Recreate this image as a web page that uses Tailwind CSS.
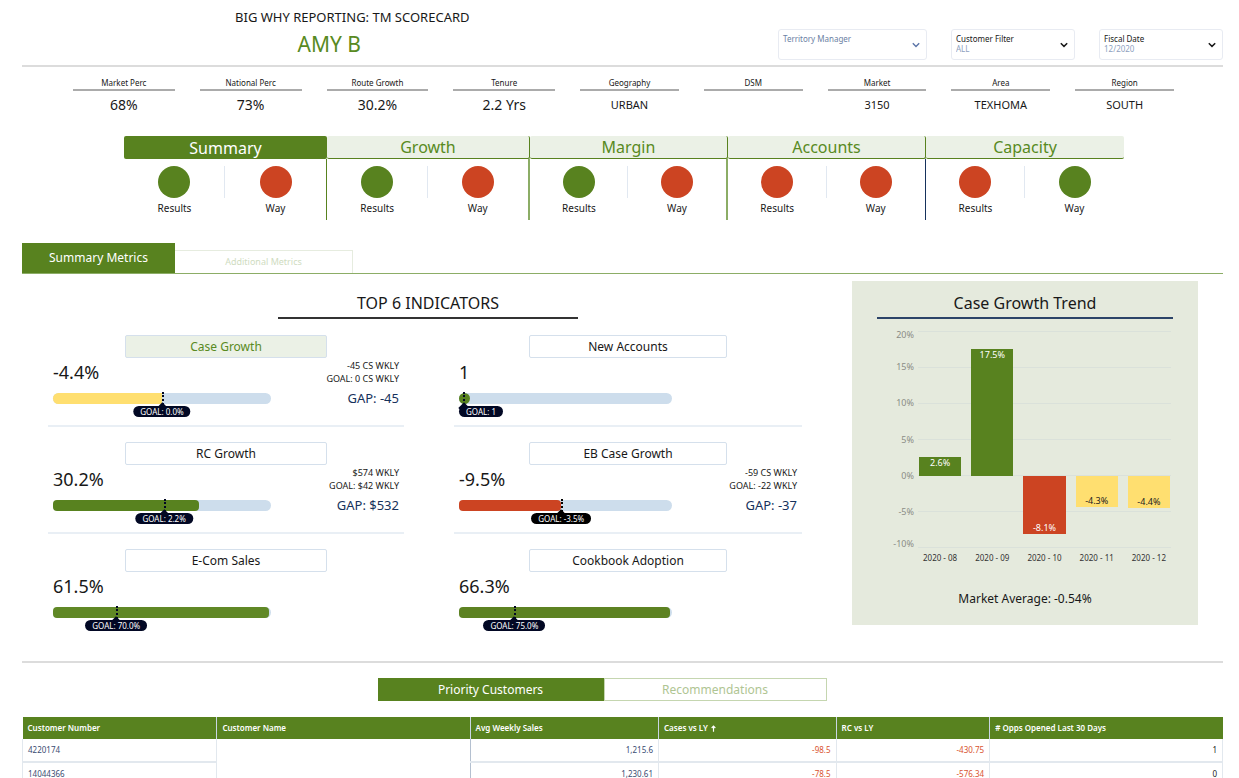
<!DOCTYPE html>
<html lang="en">
<head>
    <meta charset="UTF-8">
    <meta name="viewport" content="width=device-width, initial-scale=1.0">
    <title>TM Scorecard</title>
    <script src="https://cdn.jsdelivr.net/npm/@tailwindcss/browser@4"></script>
</head>
<body class="bg-white text-[#181818] font-['Noto_Sans',sans-serif] pl-[22px] pr-4">

    <!--Header and filters-->
    <header class="flex justify-between h-[67px] border-b-2 border-[#dcdcdc]">
        <div class="w-[55%] pt-[7px]">
            <h1 class="text-[13px] leading-5 text-center">BIG WHY REPORTING: TM SCORECARD</h1>
            <p class="text-[21px] leading-[34px] text-center text-[#588a22] pr-[46px]">AMY B</p>
        </div>
        <form class="flex gap-6 pt-[29px]">
            <div class="relative w-[149px] h-[31px] border border-[#e8ebf2] rounded-[3px] pl-1 pt-1">
                <label for="manager" class="block text-[8px] leading-[10px] text-[#6b7fa3]">Territory Manager</label>
                <select id="manager" class="absolute inset-0 w-full pl-1 pt-2 appearance-none text-[8px] text-[#8e9fc0]">
                    <option></option>
                </select>
                <svg class="absolute right-[6px] top-[11px] w-2 h-2 text-[#5b74a8]" viewBox="0 0 8 8" fill="none" stroke="currentColor" stroke-width="1.4"><path d="M0.8 2.2 4 5.4 7.2 2.2"/></svg>
            </div>
            <div class="relative w-[124px] h-[31px] border border-[#e8ebf2] rounded-[3px] pl-1 pt-1">
                <label for="customer" class="block text-[8px] leading-[10px]">Customer Filter</label>
                <select id="customer" class="absolute inset-0 w-full pl-1 pt-2 appearance-none text-[8px] text-[#8e9fc0]">
                    <option>ALL</option>
                </select>
                <svg class="absolute right-[6px] top-[11px] w-2 h-2" viewBox="0 0 8 8" fill="none" stroke="currentColor" stroke-width="1.5"><path d="M0.8 2.2 4 5.4 7.2 2.2"/></svg>
            </div>
            <div class="relative w-[124px] h-[31px] border border-[#e8ebf2] rounded-[3px] pl-1 pt-1">
                <label for="fiscal" class="block text-[8px] leading-[10px]">Fiscal Date</label>
                <select id="fiscal" class="absolute inset-0 w-full pl-1 pt-2 appearance-none text-[8px] text-[#8e9fc0]">
                    <option>12/2020</option>
                </select>
                <svg class="absolute right-[6px] top-[11px] w-2 h-2" viewBox="0 0 8 8" fill="none" stroke="currentColor" stroke-width="1.5"><path d="M0.8 2.2 4 5.4 7.2 2.2"/></svg>
            </div>
        </form>
    </header>

    <!--Profile facts-->
    <dl class="grid grid-cols-[102fr_102fr_102fr_102fr_99fr_99fr_99fr_99fr_99fr] gap-x-[25px] pl-[51px] pr-[49px] pt-[9px] h-[69px] text-center">
        <div>
            <dt class="text-[8px] leading-[13px] border-b-2 border-[#ababab]">Market Perc</dt>
            <dd class="text-[14px] leading-7">68%</dd>
        </div>
        <div>
            <dt class="text-[8px] leading-[13px] border-b-2 border-[#ababab]">National Perc</dt>
            <dd class="text-[14px] leading-7">73%</dd>
        </div>
        <div>
            <dt class="text-[8px] leading-[13px] border-b-2 border-[#ababab]">Route Growth</dt>
            <dd class="text-[14px] leading-7">30.2%</dd>
        </div>
        <div>
            <dt class="text-[8px] leading-[13px] border-b-2 border-[#ababab]">Tenure</dt>
            <dd class="text-[14px] leading-7">2.2 Yrs</dd>
        </div>
        <div>
            <dt class="text-[8px] leading-[13px] border-b-2 border-[#ababab]">Geography</dt>
            <dd class="text-[11px] leading-7">URBAN</dd>
        </div>
        <div>
            <dt class="text-[8px] leading-[13px] border-b-2 border-[#ababab]">DSM</dt>
            <dd class="text-[11px] leading-7"></dd>
        </div>
        <div>
            <dt class="text-[8px] leading-[13px] border-b-2 border-[#ababab]">Market</dt>
            <dd class="text-[11px] leading-7">3150</dd>
        </div>
        <div>
            <dt class="text-[8px] leading-[13px] border-b-2 border-[#ababab]">Area</dt>
            <dd class="text-[11px] leading-7">TEXHOMA</dd>
        </div>
        <div>
            <dt class="text-[8px] leading-[13px] border-b-2 border-[#ababab]">Region</dt>
            <dd class="text-[11px] leading-7">SOUTH</dd>
        </div>
    </dl>

    <!--Score categories-->
    <section class="grid grid-cols-[203fr_203fr_198fr_198fr_198fr] pl-[102px] pr-[99px] text-center">
        <div>
            <button class="block w-full h-[23px] rounded-[2px] bg-[#58821f] text-white text-[16px] leading-[22px]">Summary</button>
            <div class="grid grid-cols-2 h-[61px] pt-[7px] border-r border-[#58821f] text-[10px] leading-4">
                <div><div class="border-r border-[#e1e8f1]"><div class="mx-auto w-8 h-8 rounded-full bg-[#58821f]"></div></div><p class="pt-[2px]">Results</p></div>
                <div><div class="mx-auto w-8 h-8 rounded-full bg-[#cc4422]"></div><p class="pt-[2px]">Way</p></div>
            </div>
        </div>
        <div>
            <button class="block w-full h-[23px] rounded-[2px] bg-[#ebf1e6] border-r border-b border-[#58821f] text-[#588a22] text-[16px] leading-[22px]">Growth</button>
            <div class="grid grid-cols-2 h-[61px] pt-[7px] border-r-2 border-[#8cad66] text-[10px] leading-4">
                <div><div class="border-r border-[#e1e8f1]"><div class="mx-auto w-8 h-8 rounded-full bg-[#58821f]"></div></div><p class="pt-[2px]">Results</p></div>
                <div><div class="mx-auto w-8 h-8 rounded-full bg-[#cc4422]"></div><p class="pt-[2px]">Way</p></div>
            </div>
        </div>
        <div>
            <button class="block w-full h-[23px] rounded-[2px] bg-[#ebf1e6] border-r border-b border-[#58821f] text-[#588a22] text-[16px] leading-[22px]">Margin</button>
            <div class="grid grid-cols-2 h-[61px] pt-[7px] border-r-2 border-[#8cad66] text-[10px] leading-4">
                <div><div class="border-r border-[#e1e8f1]"><div class="mx-auto w-8 h-8 rounded-full bg-[#58821f]"></div></div><p class="pt-[2px]">Results</p></div>
                <div><div class="mx-auto w-8 h-8 rounded-full bg-[#cc4422]"></div><p class="pt-[2px]">Way</p></div>
            </div>
        </div>
        <div>
            <button class="block w-full h-[23px] rounded-[2px] bg-[#ebf1e6] border-r border-b border-[#58821f] text-[#588a22] text-[16px] leading-[22px]">Accounts</button>
            <div class="grid grid-cols-2 h-[61px] pt-[7px] border-r border-[#16325c] text-[10px] leading-4">
                <div><div class="border-r border-[#e1e8f1]"><div class="mx-auto w-8 h-8 rounded-full bg-[#cc4422]"></div></div><p class="pt-[2px]">Results</p></div>
                <div><div class="mx-auto w-8 h-8 rounded-full bg-[#cc4422]"></div><p class="pt-[2px]">Way</p></div>
            </div>
        </div>
        <div>
            <button class="block w-full h-[23px] rounded-[2px] bg-[#ebf1e6] border-b border-[#58821f] text-[#588a22] text-[16px] leading-[22px]">Capacity</button>
            <div class="grid grid-cols-2 h-[61px] pt-[7px] text-[10px] leading-4">
                <div><div class="border-r border-[#e1e8f1]"><div class="mx-auto w-8 h-8 rounded-full bg-[#cc4422]"></div></div><p class="pt-[2px]">Results</p></div>
                <div><div class="mx-auto w-8 h-8 rounded-full bg-[#58821f]"></div><p class="pt-[2px]">Way</p></div>
            </div>
        </div>
    </section>

    <!--Metric tabs-->
    <nav class="flex items-end mt-[23px] border-b border-[#8cad66]">
        <button class="w-[153px] h-[30px] bg-[#58821f] text-white text-[12px]">Summary Metrics</button>
        <button class="w-[178px] h-[23px] border-t border-r border-[#e6ecdf] text-[#cfdcbf] text-[9px]">Additional Metrics</button>
    </nav>

    <main class="grid grid-cols-[356fr_348fr_346fr] gap-x-[50px] pl-[26px] pr-[25px] pt-[7px]">
        <!--Indicators-->
        <div class="col-span-2">
            <div class="h-[38px] pl-[6px]">
                <h2 class="w-[40%] mx-auto h-[38px] border-b-2 border-[#333333] text-center text-[16px] leading-[44px]">TOP 6 INDICATORS</h2>
            </div>
            <div class="grid grid-cols-[356fr_348fr] gap-x-[50px] pt-4">

                <article class="h-[92px] mb-[15px] border-b-2 border-[#e9eff5]">
                    <button class="block mx-auto w-[57%] h-[23px] border border-[#d5e0ec] rounded-[2px] bg-[#ebf1e6] text-[#588a22] text-[12px] leading-5">Case Growth</button>
                    <div class="flex justify-between px-[5px]">
                        <div class="w-[63%]">
                            <p class="text-[18px] leading-[28px]">-4.4%</p>
                            <div class="relative h-[11px] mt-[7px] rounded-full bg-[#cdddec]">
                                <div class="h-full rounded-l-full bg-[#ffdf70]" style="width: 50%"></div>
                                <div class="absolute -top-px -bottom-px border-l-2 border-dotted border-[#020824]" style="left: 50%"></div>
                                <div class="absolute top-[11px] -translate-x-1/2" style="left: 50%">
                                    <div class="mx-auto w-2 h-2 -mb-[6px] rotate-45 bg-[#020824]"></div>
                                    <p class="relative px-[7px] rounded-full bg-[#020824] text-white text-[8px] leading-[11px] whitespace-nowrap">GOAL: 0.0%</p>
                                </div>
                            </div>
                        </div>
                        <div class="pt-px text-right text-[9px] leading-[13px]">
                            <p>-45 CS WKLY</p>
                            <p>GOAL: 0 CS WKLY</p>
                            <p class="text-[13px] leading-[26px] text-[#16325c]">GAP: -45</p>
                        </div>
                    </div>
                </article>

                <article class="h-[92px] mb-[15px] border-b-2 border-[#e9eff5]">
                    <button class="block mx-auto w-[57%] h-[23px] border border-[#d5e0ec] rounded-[2px] text-[12px] leading-5">New Accounts</button>
                    <div class="flex justify-between px-[5px]">
                        <div class="w-[63%]">
                            <p class="text-[18px] leading-[28px]">1</p>
                            <div class="relative h-[11px] mt-[7px] rounded-full bg-[#cdddec]">
                                <div class="h-full rounded-full bg-[#58821f]" style="width: 5%"></div>
                                <div class="absolute -top-px -bottom-px border-l-2 border-dotted border-[#020824]" style="left: 2%"></div>
                                <div class="absolute top-[11px] left-0">
                                    <div class="ml-px w-2 h-2 -mb-[6px] rotate-45 bg-[#020824]"></div>
                                    <p class="relative px-[7px] rounded-full bg-[#020824] text-white text-[8px] leading-[11px] whitespace-nowrap">GOAL: 1</p>
                                </div>
                            </div>
                        </div>
                    </div>
                </article>

                <article class="h-[92px] mb-[15px] border-b-2 border-[#e9eff5]">
                    <button class="block mx-auto w-[57%] h-[23px] border border-[#d5e0ec] rounded-[2px] text-[12px] leading-5">RC Growth</button>
                    <div class="flex justify-between px-[5px]">
                        <div class="w-[63%]">
                            <p class="text-[18px] leading-[28px]">30.2%</p>
                            <div class="relative h-[11px] mt-[7px] rounded-full bg-[#cdddec]">
                                <div class="h-full rounded-[4px] bg-[#58821f]" style="width: 67%"></div>
                                <div class="absolute -top-px -bottom-px border-l-2 border-dotted border-[#020824]" style="left: 51%"></div>
                                <div class="absolute top-[11px] -translate-x-1/2" style="left: 51%">
                                    <div class="mx-auto w-2 h-2 -mb-[6px] rotate-45 bg-[#020824]"></div>
                                    <p class="relative px-[7px] rounded-full bg-[#020824] text-white text-[8px] leading-[11px] whitespace-nowrap">GOAL: 2.2%</p>
                                </div>
                            </div>
                        </div>
                        <div class="pt-px text-right text-[9px] leading-[13px]">
                            <p>$574 WKLY</p>
                            <p>GOAL: $42 WKLY</p>
                            <p class="text-[13px] leading-[26px] text-[#16325c]">GAP: $532</p>
                        </div>
                    </div>
                </article>

                <article class="h-[92px] mb-[15px] border-b-2 border-[#e9eff5]">
                    <button class="block mx-auto w-[57%] h-[23px] border border-[#d5e0ec] rounded-[2px] text-[12px] leading-5">EB Case Growth</button>
                    <div class="flex justify-between px-[5px]">
                        <div class="w-[63%]">
                            <p class="text-[18px] leading-[28px]">-9.5%</p>
                            <div class="relative h-[11px] mt-[7px] rounded-full bg-[#cdddec]">
                                <div class="h-full rounded-[4px] bg-[#cc4422]" style="width: 48%"></div>
                                <div class="absolute -top-px -bottom-px border-l-2 border-dotted border-black" style="left: 48%"></div>
                                <div class="absolute top-[11px] -translate-x-1/2" style="left: 48%">
                                    <div class="mx-auto w-2 h-2 -mb-[6px] rotate-45 bg-black"></div>
                                    <p class="relative px-[7px] rounded-full bg-black text-white text-[8px] leading-[11px] whitespace-nowrap">GOAL: -3.5%</p>
                                </div>
                            </div>
                        </div>
                        <div class="pt-px text-right text-[9px] leading-[13px]">
                            <p>-59 CS WKLY</p>
                            <p>GOAL: -22 WKLY</p>
                            <p class="text-[13px] leading-[26px] text-[#16325c]">GAP: -37</p>
                        </div>
                    </div>
                </article>

                <article class="h-[92px]">
                    <button class="block mx-auto w-[57%] h-[23px] border border-[#d5e0ec] rounded-[2px] text-[12px] leading-5">E-Com Sales</button>
                    <div class="px-[5px]">
                        <div class="w-[63%]">
                            <p class="text-[18px] leading-[28px]">61.5%</p>
                            <div class="relative h-[11px] mt-[7px] rounded-full bg-[#cdddec]">
                                <div class="h-full rounded-[4px] bg-[#608826]" style="width: 99%"></div>
                                <div class="absolute -top-px -bottom-px border-l-2 border-dotted border-[#020824]" style="left: 29%"></div>
                                <div class="absolute top-[11px] -translate-x-1/2" style="left: 29%">
                                    <div class="mx-auto w-2 h-2 -mb-[6px] rotate-45 bg-[#020824]"></div>
                                    <p class="relative px-[7px] rounded-full bg-[#020824] text-white text-[8px] leading-[11px] whitespace-nowrap">GOAL: 70.0%</p>
                                </div>
                            </div>
                        </div>
                    </div>
                </article>

                <article class="h-[92px]">
                    <button class="block mx-auto w-[57%] h-[23px] border border-[#d5e0ec] rounded-[2px] text-[12px] leading-5">Cookbook Adoption</button>
                    <div class="px-[5px]">
                        <div class="w-[63%]">
                            <p class="text-[18px] leading-[28px]">66.3%</p>
                            <div class="relative h-[11px] mt-[7px] rounded-full bg-[#cdddec]">
                                <div class="h-full rounded-[4px] bg-[#5d8222]" style="width: 99%"></div>
                                <div class="absolute -top-px -bottom-px border-l-2 border-dotted border-[#020824]" style="left: 26%"></div>
                                <div class="absolute top-[11px] -translate-x-1/2" style="left: 26%">
                                    <div class="mx-auto w-2 h-2 -mb-[6px] rotate-45 bg-[#020824]"></div>
                                    <p class="relative px-[7px] rounded-full bg-[#020824] text-white text-[8px] leading-[11px] whitespace-nowrap">GOAL: 75.0%</p>
                                </div>
                            </div>
                        </div>
                    </div>
                </article>
            </div>
        </div>

        <!--Trend chart-->
        <aside class="h-[344px] bg-[#e5eadd] px-[25px]">
            <h2 class="h-[38px] border-b-2 border-[#2c4468] text-center text-[16px] leading-[44px]">Case Growth Trend</h2>
            <div class="flex pt-[10px] pr-[2px]">
                <div class="flex flex-col w-[37px] h-[221px] text-right text-[9px] leading-3 text-[#8a8c86]">
                    <p class="h-5">20%</p>
                    <p class="flex-1 content-center">15%</p>
                    <p class="flex-1 content-center">10%</p>
                    <p class="flex-1 content-center">5%</p>
                    <p class="flex-1 content-center">0%</p>
                    <p class="flex-1 content-center">-5%</p>
                    <p class="h-5 content-end">-10%</p>
                </div>
                <div class="flex-1 ml-1">
                    <div class="relative h-[217px] mt-[2px]">
                        <div class="flex flex-col justify-between h-full">
                            <div class="border-t border-[#dae1da]"></div>
                            <div class="border-t border-[#dae1da]"></div>
                            <div class="border-t border-[#dae1da]"></div>
                            <div class="border-t border-[#dae1da]"></div>
                            <div class="border-t border-[#dae1da]"></div>
                            <div class="border-t border-[#dae1da]"></div>
                            <div class="border-t border-[#dae1da]"></div>
                        </div>
                        <div class="absolute inset-0 grid grid-cols-5 gap-x-[10px] px-px text-center text-[9px] leading-3 text-white">
                            <div class="relative bg-[#58821f]" style="height: 8.7%; top: 58%">2.6%</div>
                            <div class="relative bg-[#58821f]" style="height: 58.3%; top: 8.4%">17.5%</div>
                            <div class="relative bg-[#cc4422] content-end" style="height: 27%; top: 66.7%">-8.1%</div>
                            <div class="relative bg-[#ffdf70] content-end text-[#222222]" style="height: 14.3%; top: 66.7%">-4.3%</div>
                            <div class="relative bg-[#ffdf70] content-end text-[#222222]" style="height: 14.7%; top: 66.7%">-4.4%</div>
                        </div>
                    </div>
                    <div class="grid grid-cols-5 gap-x-[10px] px-px pt-1 text-center text-[8px] leading-3 text-[#333333] whitespace-nowrap">
                        <p>2020 - 08</p>
                        <p>2020 - 09</p>
                        <p>2020 - 10</p>
                        <p>2020 - 11</p>
                        <p>2020 - 12</p>
                    </div>
                </div>
            </div>
            <p class="pt-[25px] text-center text-[12px] leading-5">Market Average: -0.54%</p>
        </aside>
    </main>

    <!--Customers-->
    <section class="mt-5 border-t-2 border-[#dcdcdc]">
        <div class="flex justify-center pt-[15px] pr-[41px]">
            <button class="w-[226px] h-[23px] bg-[#58821f] text-white text-[12px]">Priority Customers</button>
            <button class="w-[223px] h-[23px] border border-[#c5d6b0] text-[#afc593] text-[12px]">Recommendations</button>
        </div>
        <table class="w-full table-fixed mt-4 text-[8px] leading-3">
            <colgroup>
                <col style="width: 16.2%">
                <col style="width: 21.1%">
                <col style="width: 15.7%">
                <col style="width: 14.8%">
                <col style="width: 12.8%">
                <col style="width: 19.4%">
            </colgroup>
            <thead>
                <tr class="h-[22px] bg-[#58821f] text-white text-left">
                    <th class="px-[5px] font-semibold border-r border-[#c9d6e4]">Customer Number</th>
                    <th class="px-[5px] font-semibold border-r border-[#c9d6e4]">Customer Name</th>
                    <th class="px-[5px] font-semibold border-r border-[#c9d6e4]">Avg Weekly Sales</th>
                    <th class="px-[5px] font-semibold border-r border-[#c9d6e4]">
                        Cases vs LY
                        <svg class="inline w-[5px] h-[7px] ml-px" viewBox="0 0 6 8" fill="none" stroke="currentColor" stroke-width="1.4"><path d="M3 8V1.2M0.8 3.4 3 1.2 5.2 3.4"/></svg>
                    </th>
                    <th class="px-[5px] font-semibold border-r border-[#c9d6e4]">RC vs LY</th>
                    <th class="px-[5px] font-semibold"># Opps Opened Last 30 Days</th>
                </tr>
            </thead>
            <tbody class="text-right text-[#3a4c72]">
                <tr class="h-[23px]">
                    <td class="px-[5px] border-x border-b-2 border-[#e2e8ee] text-left">4220174</td>
                    <td class="px-[5px] border-r border-r-[#b4c0d0]"></td>
                    <td class="px-[5px] border-r border-b-2 border-[#e2e8ee]">1,215.6</td>
                    <td class="px-[5px] border-r border-b-2 border-[#e2e8ee] text-[#d9532f]">-98.5</td>
                    <td class="px-[5px] border-r border-b-2 border-[#e2e8ee] text-[#d9532f]">-430.75</td>
                    <td class="px-[5px] border-r border-b-2 border-[#e2e8ee] text-[#222222]">1</td>
                </tr>
                <tr class="h-[23px]">
                    <td class="px-[5px] border-x border-b-2 border-[#e2e8ee] text-left">14044366</td>
                    <td class="px-[5px] border-r border-r-[#b4c0d0]"></td>
                    <td class="px-[5px] border-r border-b-2 border-[#e2e8ee]">1,230.61</td>
                    <td class="px-[5px] border-r border-b-2 border-[#e2e8ee] text-[#d9532f]">-78.5</td>
                    <td class="px-[5px] border-r border-b-2 border-[#e2e8ee] text-[#d9532f]">-576.34</td>
                    <td class="px-[5px] border-r border-b-2 border-[#e2e8ee] text-[#222222]">0</td>
                </tr>
            </tbody>
        </table>
    </section>
</body>
</html>
